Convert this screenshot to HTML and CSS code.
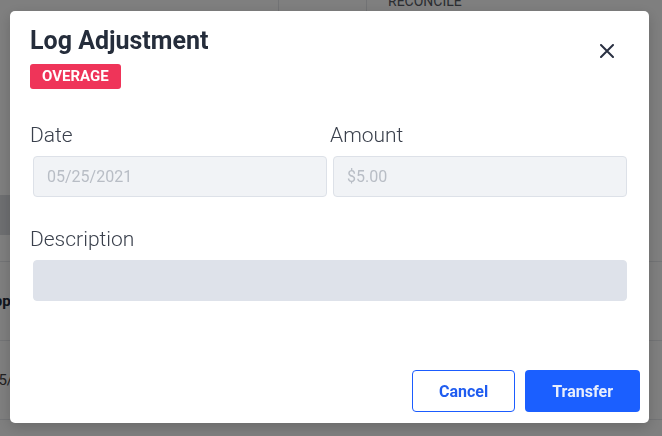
FILE: index.html
```html
<!DOCTYPE html>
<html lang="en">
<head>
    <meta charset="UTF-8">
    <title>Log Adjustment</title>
    <link rel="stylesheet" href="styles.css">
</head>
<body>
    <!-- page behind the dialog -->
    <div class="page">
        <div class="topbar">
            <div class="cell c1"></div>
            <div class="cell c2"></div>
            <div class="cell c3">Reconcile</div>
        </div>
        <div class="tabs-gap"></div>
        <div class="tab-row"><div class="tab-btn"></div></div>
        <div class="list-row first"><span class="cut bold">App</span></div>
        <div class="list-row"><span class="cut date">05/25</span></div>
        <div class="list-row last"></div>
    </div>

    <div class="overlay"></div>

    <div class="modal">
        <div class="modal-head">
            <div>
                <h1 class="modal-title">Log Adjustment</h1>
                <span class="badge">Overage</span>
            </div>
            <button class="close" aria-label="Close">
                <svg width="14" height="14" viewBox="0 0 14 14">
                    <path d="M1 1 L13 13 M13 1 L1 13" stroke="#2a3142" stroke-width="2" stroke-linecap="round"/>
                </svg>
            </button>
        </div>

        <div class="fields">
            <div class="field">
                <label>Date</label>
                <input type="text" value="05/25/2021" disabled>
            </div>
            <div class="field">
                <label>Amount</label>
                <input type="text" value="$5.00" disabled>
            </div>
        </div>

        <div class="field desc">
            <label>Description</label>
            <input type="text" class="desc-input">
        </div>

        <div class="modal-foot">
            <button class="btn btn-outline">Cancel</button>
            <button class="btn btn-primary">Transfer</button>
        </div>
    </div>
</body>
</html>
```

FILE: styles.css
```css
* {
    box-sizing: border-box;
}
body {
    margin: 0;
    width: 662px;
    height: 436px;
    overflow: hidden;
    background: #fff;
    font-family: Roboto, 'Noto Sans', sans-serif;
    color: #252d3b;
}

/* background page */
.page {
    height: 436px;
}
.topbar {
    display: flex;
    height: 12px;
}
.topbar .cell {
    border-right: 1px solid #e4e6ea;
}
.c1 { width: 279px; }
.c2 { width: 88px; }
.c3 {
    border-right: 0 !important;
    padding-left: 21px;
    margin-top: -6px;
    font-size: 14px;
    line-height: 14px;
    color: #555a63;
    text-transform: uppercase;
}
.tabs-gap {
    height: 183px;
}
.tab-row {
    height: 66px;
}
.tab-btn {
    width: 120px;
    height: 40px;
    background: #dcdee3;
}
.list-row {
    height: 79px;
    border-top: 1px solid #e6e8ec;
    display: flex;
    align-items: center;
}
.list-row.last { height: 30px; }
.cut {
    font-size: 15px;
    color: #252d3b;
}
.cut.bold { font-weight: 700; margin-left: -16px; }
.cut.date { margin-left: -10px; color: #444; }

.overlay {
    position: fixed;
    inset: 0;
    background: rgba(0, 0, 0, .5);
}

/* dialog */
.modal {
    position: fixed;
    left: 10px;
    top: 11px;
    width: 639px;
    height: 412px;
    background: #fff;
    border-radius: 5px;
    box-shadow: 0 4px 14px rgba(0, 0, 0, .18);
    display: flex;
    flex-direction: column;
    padding: 15px 22px 11px 20px;
}
.modal-head {
    display: flex;
    justify-content: space-between;
    align-items: flex-start;
}
.modal-title {
    margin: 0;
    font-size: 25px;
    line-height: 29px;
    font-weight: 700;
    color: #252d3b;
}
.badge {
    display: inline-block;
    margin-top: 9px;
    padding: 0 12px;
    height: 25px;
    line-height: 25px;
    border-radius: 3px;
    background: #ef3459;
    color: #fff;
    font-size: 15px;
    font-weight: 700;
    text-transform: uppercase;
}
.close {
    width: 24px;
    height: 24px;
    margin: 13px 8px 0 0;
    padding: 0;
    border: 0;
    background: none;
    display: flex;
    align-items: center;
    justify-content: center;
}

.fields {
    display: grid;
    grid-template-columns: 1fr 1fr;
    column-gap: 3px;
    margin-top: 34px;
}
.field label {
    display: block;
    font-size: 21px;
    line-height: 24px;
    font-weight: 300;
    color: #3a404c;
}
.field input {
    display: block;
    width: calc(100% - 3px);
    height: 41px;
    margin: 9px 0 0 3px;
    padding: 0 13px;
    border: 1px solid #dde1e8;
    border-radius: 4px;
    background: #f1f3f6;
    font: inherit;
    font-size: 16px;
    color: #b8bdc5;
    -webkit-text-fill-color: #b8bdc5;
    opacity: 1;
}
.field.desc {
    margin-top: 30px;
}
.field input.desc-input {
    background: #dee2ea;
    border-color: #dee2ea;
}

.modal-foot {
    margin-top: auto;
    margin-right: -13px;
    display: flex;
    justify-content: flex-end;
    gap: 10px;
}
.btn {
    height: 42px;
    border-radius: 4px;
    font-family: Roboto, 'Noto Sans', sans-serif;
    font-size: 16px;
    font-weight: 700;
}
.btn-outline {
    padding: 0 26px;
    border: 1px solid #1b5cff;
    background: #fff;
    color: #1f5cf0;
}
.btn-primary {
    padding: 0 27px;
    border: 0;
    background: #1b5fff;
    color: #e8eefc;
}
```
